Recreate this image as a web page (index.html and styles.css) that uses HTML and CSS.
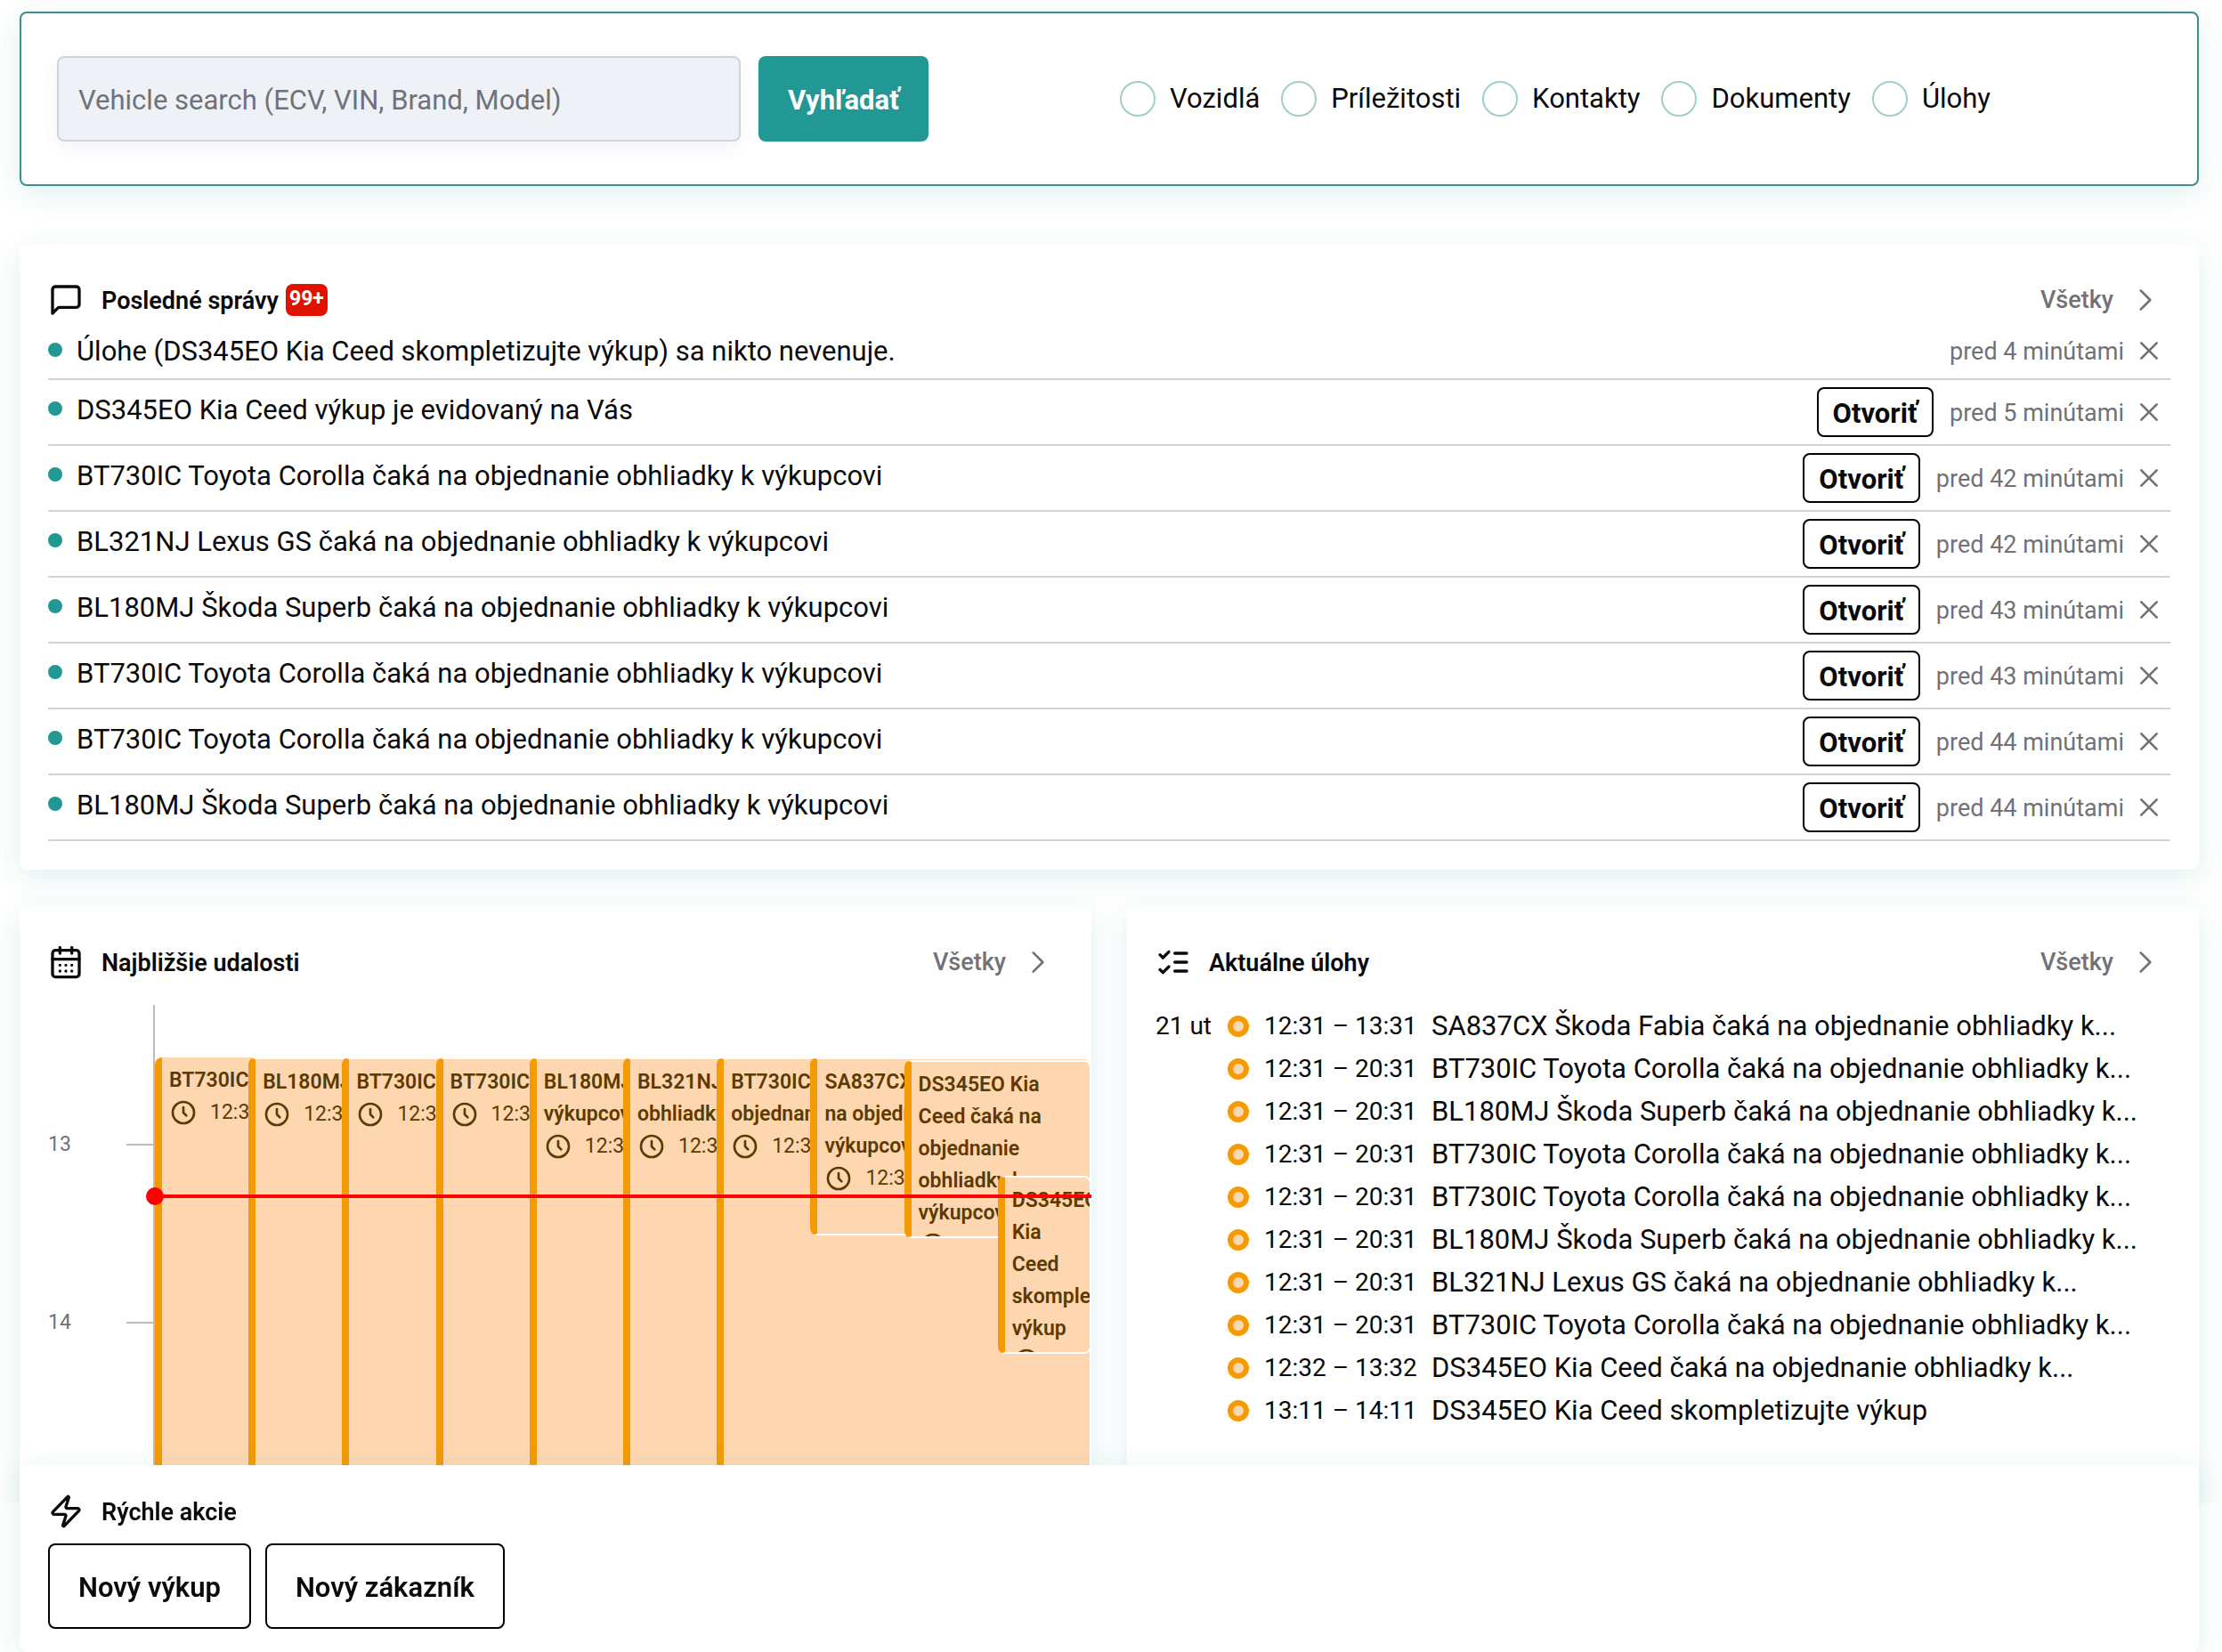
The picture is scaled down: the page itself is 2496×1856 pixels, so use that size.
FILE: index.html
```html
<!DOCTYPE html>
<html lang="sk">

<head>
    <meta charset="UTF-8" />
    <meta name="viewport" content="width=device-width, initial-scale=1.0" />
    <title>Prehľad</title>
    <link rel="stylesheet" href="styles.css">
</head>

<body>
    <svg class="sprite" aria-hidden="true">
        <symbol id="i-message" viewBox="0 0 24 24">
            <path d="M21 15a2 2 0 0 1-2 2H7l-4 4V5a2 2 0 0 1 2-2h14a2 2 0 0 1 2 2z" />
        </symbol>
        <symbol id="i-calendar" viewBox="0 0 24 24">
            <path d="M8 2v4M16 2v4M3 10h18M8 14h.01M12 14h.01M16 14h.01M8 18h.01M12 18h.01M16 18h.01" />
            <rect x="3" y="4" width="18" height="18" rx="2" />
        </symbol>
        <symbol id="i-tasks" viewBox="0 0 24 24">
            <path d="m3 17 2 2 4-4M3 7l2 2 4-4M13 6h8M13 12h8M13 18h8" />
        </symbol>
        <symbol id="i-zap" viewBox="0 0 24 24">
            <path d="M4 14a1 1 0 0 1-.78-1.63l9.9-10.2a.5.5 0 0 1 .86.46l-1.92 6.02A1 1 0 0 0 13 10h7a1 1 0 0 1 .78 1.63l-9.9 10.2a.5.5 0 0 1-.86-.46l1.92-6.02A1 1 0 0 0 11 14z" />
        </symbol>
        <symbol id="i-chevron" viewBox="0 0 24 24">
            <path d="m8 4 8 8-8 8" />
        </symbol>
        <symbol id="i-close" viewBox="0 0 24 24">
            <path d="M18.5 5.5l-13 13M5.5 5.5l13 13" />
        </symbol>
        <symbol id="i-clock" viewBox="0 0 24 24">
            <circle cx="12" cy="12" r="9" />
            <path d="M12 7.5V12l2.5 2.5" />
        </symbol>
    </svg>

    <main>
        <form class="card search">
            <div class="search-box">
                <input type="text" class="search-input" aria-label="Vehicle search"
                    placeholder="Vehicle search (ECV, VIN, Brand, Model)" />
                <button type="button" class="btn-primary">Vyhľadať</button>
            </div>
            <div class="search-types">
                <label><input type="radio" name="typ" />Vozidlá</label>
                <label><input type="radio" name="typ" />Príležitosti</label>
                <label><input type="radio" name="typ" />Kontakty</label>
                <label><input type="radio" name="typ" />Dokumenty</label>
                <label><input type="radio" name="typ" />Úlohy</label>
            </div>
        </form>

        <section class="card">
            <header class="card-header">
                <svg class="icon"><use href="#i-message" /></svg>
                <h2>Posledné správy</h2>
                <span class="badge">99+</span>
                <a href="#" class="all">Všetky <svg class="icon-sm"><use href="#i-chevron" /></svg></a>
            </header>
            <ul class="messages">
                <li>
                    <p>Úlohe (DS345EO Kia Ceed skompletizujte výkup) sa nikto nevenuje.</p>
                    <div class="actions">
                        <time>pred 4 minútami</time>
                        <button class="close" aria-label="Zavrieť"><svg class="icon-sm"><use href="#i-close" /></svg></button>
                    </div>
                </li>
                <li>
                    <p>DS345EO Kia Ceed výkup je evidovaný na Vás</p>
                    <div class="actions">
                        <button class="btn-small">Otvoriť</button>
                        <time>pred 5 minútami</time>
                        <button class="close" aria-label="Zavrieť"><svg class="icon-sm"><use href="#i-close" /></svg></button>
                    </div>
                </li>
                <li>
                    <p>BT730IC Toyota Corolla čaká na objednanie obhliadky k výkupcovi</p>
                    <div class="actions">
                        <button class="btn-small">Otvoriť</button>
                        <time>pred 42 minútami</time>
                        <button class="close" aria-label="Zavrieť"><svg class="icon-sm"><use href="#i-close" /></svg></button>
                    </div>
                </li>
                <li>
                    <p>BL321NJ Lexus GS čaká na objednanie obhliadky k výkupcovi</p>
                    <div class="actions">
                        <button class="btn-small">Otvoriť</button>
                        <time>pred 42 minútami</time>
                        <button class="close" aria-label="Zavrieť"><svg class="icon-sm"><use href="#i-close" /></svg></button>
                    </div>
                </li>
                <li>
                    <p>BL180MJ Škoda Superb čaká na objednanie obhliadky k výkupcovi</p>
                    <div class="actions">
                        <button class="btn-small">Otvoriť</button>
                        <time>pred 43 minútami</time>
                        <button class="close" aria-label="Zavrieť"><svg class="icon-sm"><use href="#i-close" /></svg></button>
                    </div>
                </li>
                <li>
                    <p>BT730IC Toyota Corolla čaká na objednanie obhliadky k výkupcovi</p>
                    <div class="actions">
                        <button class="btn-small">Otvoriť</button>
                        <time>pred 43 minútami</time>
                        <button class="close" aria-label="Zavrieť"><svg class="icon-sm"><use href="#i-close" /></svg></button>
                    </div>
                </li>
                <li>
                    <p>BT730IC Toyota Corolla čaká na objednanie obhliadky k výkupcovi</p>
                    <div class="actions">
                        <button class="btn-small">Otvoriť</button>
                        <time>pred 44 minútami</time>
                        <button class="close" aria-label="Zavrieť"><svg class="icon-sm"><use href="#i-close" /></svg></button>
                    </div>
                </li>
                <li>
                    <p>BL180MJ Škoda Superb čaká na objednanie obhliadky k výkupcovi</p>
                    <div class="actions">
                        <button class="btn-small">Otvoriť</button>
                        <time>pred 44 minútami</time>
                        <button class="close" aria-label="Zavrieť"><svg class="icon-sm"><use href="#i-close" /></svg></button>
                    </div>
                </li>
            </ul>
        </section>

        <div class="columns">
            <section class="card card-events">
                <header class="card-header">
                    <svg class="icon"><use href="#i-calendar" /></svg>
                    <h2>Najbližšie udalosti</h2>
                    <a href="#" class="all">Všetky <svg class="icon-sm"><use href="#i-chevron" /></svg></a>
                </header>
                <div class="timeline">
                    <div class="hours">
                        <span class="hour">13</span>
                        <span class="hour">14</span>
                    </div>
                    <!-- --col = stĺpec, --start = minúty od 12:31, --len = dĺžka v minútach -->
                    <div class="events">
                        <article class="event event-first" style="--col: 0; --start: 0; --len: 480">
                            <h3>BT730IC</h3>
                            <p><svg class="icon-sm"><use href="#i-clock" /></svg>12:31</p>
                        </article>
                        <article class="event" style="--col: 1; --start: 0; --len: 480">
                            <h3>BL180MJ</h3>
                            <p><svg class="icon-sm"><use href="#i-clock" /></svg>12:31</p>
                        </article>
                        <article class="event" style="--col: 2; --start: 0; --len: 480">
                            <h3>BT730IC</h3>
                            <p><svg class="icon-sm"><use href="#i-clock" /></svg>12:31</p>
                        </article>
                        <article class="event" style="--col: 3; --start: 0; --len: 480">
                            <h3>BT730IC</h3>
                            <p><svg class="icon-sm"><use href="#i-clock" /></svg>12:31</p>
                        </article>
                        <article class="event" style="--col: 4; --start: 0; --len: 480">
                            <h3>BL180MJ<br>výkupcovi</h3>
                            <p><svg class="icon-sm"><use href="#i-clock" /></svg>12:31</p>
                        </article>
                        <article class="event" style="--col: 5; --start: 0; --len: 480">
                            <h3>BL321NJ<br>obhliadky</h3>
                            <p><svg class="icon-sm"><use href="#i-clock" /></svg>12:31</p>
                        </article>
                        <article class="event" style="--col: 6; --start: 0; --len: 480">
                            <h3>BT730IC<br>objednanie</h3>
                            <p><svg class="icon-sm"><use href="#i-clock" /></svg>12:31</p>
                        </article>
                        <article class="event" style="--col: 7; --start: 0; --len: 60">
                            <h3>SA837CX<br>na objednanie<br>výkupcovi</h3>
                            <p><svg class="icon-sm"><use href="#i-clock" /></svg>12:31</p>
                        </article>
                        <article class="event" style="--col: 8; --start: 1; --len: 60">
                            <h3>DS345EO Kia<br>Ceed čaká na<br>objednanie<br>obhliadky k<br>výkupcovi</h3>
                            <p><svg class="icon-sm"><use href="#i-clock" /></svg>12:32</p>
                        </article>
                        <article class="event" style="--col: 9; --start: 40; --len: 60">
                            <h3>DS345EO<br>Kia<br>Ceed<br>skompletizujte<br>výkup</h3>
                            <p><svg class="icon-sm"><use href="#i-clock" /></svg>13:11</p>
                        </article>
                        <div class="now"></div>
                    </div>
                </div>
            </section>

            <section class="card">
                <header class="card-header">
                    <svg class="icon"><use href="#i-tasks" /></svg>
                    <h2>Aktuálne úlohy</h2>
                    <a href="#" class="all">Všetky <svg class="icon-sm"><use href="#i-chevron" /></svg></a>
                </header>
                <table class="tasks">
                    <tr><td class="day">21 ut</td><td class="state"><i class="dot"></i></td><td class="range">12:31 – 13:31</td><td>SA837CX Škoda Fabia čaká na objednanie obhliadky k...</td></tr>
                    <tr><td></td><td><i class="dot"></i></td><td class="range">12:31 – 20:31</td><td>BT730IC Toyota Corolla čaká na objednanie obhliadky k...</td></tr>
                    <tr><td></td><td><i class="dot"></i></td><td class="range">12:31 – 20:31</td><td>BL180MJ Škoda Superb čaká na objednanie obhliadky k...</td></tr>
                    <tr><td></td><td><i class="dot"></i></td><td class="range">12:31 – 20:31</td><td>BT730IC Toyota Corolla čaká na objednanie obhliadky k...</td></tr>
                    <tr><td></td><td><i class="dot"></i></td><td class="range">12:31 – 20:31</td><td>BT730IC Toyota Corolla čaká na objednanie obhliadky k...</td></tr>
                    <tr><td></td><td><i class="dot"></i></td><td class="range">12:31 – 20:31</td><td>BL180MJ Škoda Superb čaká na objednanie obhliadky k...</td></tr>
                    <tr><td></td><td><i class="dot"></i></td><td class="range">12:31 – 20:31</td><td>BL321NJ Lexus GS čaká na objednanie obhliadky k...</td></tr>
                    <tr><td></td><td><i class="dot"></i></td><td class="range">12:31 – 20:31</td><td>BT730IC Toyota Corolla čaká na objednanie obhliadky k...</td></tr>
                    <tr><td></td><td><i class="dot"></i></td><td class="range">12:32 – 13:32</td><td>DS345EO Kia Ceed čaká na objednanie obhliadky k...</td></tr>
                    <tr><td></td><td><i class="dot"></i></td><td class="range">13:11 – 14:11</td><td>DS345EO Kia Ceed skompletizujte výkup</td></tr>
                </table>
            </section>
        </div>
    </main>

    <section class="card quick">
        <header class="card-header">
            <svg class="icon"><use href="#i-zap" /></svg>
            <h2>Rýchle akcie</h2>
        </header>
        <div class="quick-buttons">
            <button class="btn-outline">Nový výkup</button>
            <button class="btn-outline">Nový zákazník</button>
        </div>
    </section>
</body>

</html>
```
FILE: styles.css
```css
:root {
    --teal: #219894;
    --teal-border: #3a8f8f;
    --text: #0a0a0b;
    --muted: #71717a;
    --line: #d1d5db;
    --orange: #f39a05;
    --peach: #fed7b0;
    --brown: #5c3a00;
}

* {
    box-sizing: border-box;
}

body {
    margin: 0;
    padding: 13px 26px 0 22px;
    background-color: #fff;
    color: var(--text);
    font-family: Roboto, "Liberation Sans", sans-serif;
    font-size: 31px;
    line-height: 48px;
}

h2,
h3,
p,
ul {
    margin: 0;
    padding: 0;
}

button,
input {
    font-family: inherit;
    font-size: inherit;
    color: inherit;
}

.sprite {
    display: none;
}

.icon,
.icon-sm {
    flex: none;
    width: 40px;
    height: 40px;
    fill: none;
    stroke: currentColor;
    stroke-width: 2;
    stroke-linecap: round;
    stroke-linejoin: round;
}

.icon-sm {
    width: 32px;
    height: 32px;
}

.card {
    padding: 32px;
    background-color: #fff;
    border-radius: 8px;
    box-shadow: 0 8px 32px rgba(33, 152, 148, 0.14);
}

.card-header {
    display: flex;
    align-items: center;
    height: 64px;
}

.card-header h2 {
    margin-left: 20px;
    padding-top: 2px;
    font-size: 27px;
    font-weight: 600;
}

.badge {
    margin-left: 8px;
    height: 36px;
    padding: 0 4px;
    border-radius: 8px;
    background-color: #e11200;
    color: #fff;
    font-size: 23px;
    font-weight: 700;
    line-height: 34px;
}

.all {
    display: flex;
    align-items: center;
    gap: 20px;
    margin-left: auto;
    margin-right: 12px;
    color: var(--muted);
    font-size: 27px;
    font-weight: 500;
    text-decoration: none;
}

/* search */

.search {
    display: grid;
    grid-template-columns: 1fr 1fr;
    align-items: center;
    padding: 48px 40px;
    border: 2px solid var(--teal-border);
}

.search-box {
    display: flex;
    gap: 20px;
}

.search-input {
    width: 768px;
    height: 96px;
    padding: 2px 22px 0;
    border: 2px solid #cbd5e1;
    border-radius: 8px;
    background-color: #eef1f5;
    box-shadow: 0 8px 20px rgba(60, 60, 150, 0.06);
}

.search-input::placeholder {
    color: var(--muted);
}

.btn-primary {
    height: 96px;
    padding: 2px 33px 0;
    border: 0;
    border-radius: 8px;
    background-color: var(--teal);
    color: #fff;
    font-weight: 700;
}

.search-types {
    display: flex;
    gap: 24px;
    padding-left: 12px;
}

.search-types label {
    display: flex;
    align-items: center;
    gap: 16px;
}

.search-types input {
    appearance: none;
    width: 40px;
    height: 40px;
    margin: 0;
    border: 2px solid #a3cccc;
    border-radius: 50%;
    background-color: #fff;
}

/* messages */

.search + .card {
    margin-top: 64px;
}

.messages {
    list-style: none;
}

.messages li {
    display: flex;
    align-items: flex-start;
    height: 74px;
    padding: 8px 0;
    border-bottom: 2px solid var(--line);
}

.messages li:first-child {
    height: 58px;
    padding-top: 0;
}

.messages li::before {
    content: "";
    flex: none;
    width: 16px;
    height: 16px;
    margin: 16px 16px 0 0;
    border-radius: 50%;
    background-color: var(--teal);
}

.messages p,
.messages time {
    padding-top: 2px;
}

.actions {
    display: flex;
    align-items: center;
    margin-left: auto;
    padding-right: 8px;
    color: var(--muted);
    font-size: 27px;
}

.btn-small {
    height: 56px;
    margin-right: 18px;
    padding: 2px 16px 0;
    border: 2px solid #000;
    border-radius: 8px;
    background-color: #fff;
    color: var(--text);
    font-size: 31px;
    font-weight: 700;
}

.close {
    display: flex;
    margin-left: 12px;
    padding: 0;
    border: 0;
    background: none;
}

/* events */

.columns {
    display: grid;
    grid-template-columns: 1fr 1fr;
    gap: 40px;
    margin-top: 40px;
}

.card-events {
    padding-right: 0;
    padding-bottom: 0;
}

.card-events .all {
    margin-right: 44px;
}

.timeline {
    display: flex;
    height: 560px;
    margin-top: 16px;
}

.hours {
    flex: none;
    width: 120px;
    padding-top: 133px;
    border-right: 2px solid #bbb;
}

.hour {
    display: flex;
    align-items: center;
    justify-content: space-between;
    height: 48px;
    margin-bottom: 152px;
    color: var(--muted);
    font-size: 23px;
}

.hour::after {
    content: "";
    width: 30px;
    height: 2px;
    background-color: #bbb;
}

/* cut at the bottom only, the dot of the current time sticks out on the left */
.events {
    position: relative;
    flex: 1;
    overflow-x: visible;
    overflow-y: clip;
}

.event {
    position: absolute;
    top: calc(59px + var(--start) * 200px / 60);
    left: calc(var(--col) * 10%);
    right: 0;
    height: calc(var(--len) * 200px / 60);
    padding: 8px;
    overflow: hidden;
    border: 2px solid #fff;
    border-left: 8px solid var(--orange);
    border-radius: 8px;
    background-color: var(--peach);
    color: var(--brown);
    font-size: 23px;
    line-height: 38px;
    white-space: nowrap;
}

.event-first {
    border-top: 0;
}

.event h3 {
    font-size: 23px;
    font-weight: 600;
    line-height: 36px;
}

.event p {
    display: flex;
    align-items: center;
    gap: 14px;
    height: 36px;
}

.now {
    position: absolute;
    top: 213px;
    left: 0;
    right: 0;
    height: 4px;
    background-color: #f00;
}

.now::before {
    content: "";
    position: absolute;
    top: -8px;
    left: -10px;
    width: 20px;
    height: 20px;
    border-radius: 50%;
    background-color: #f00;
}

/* tasks */

.tasks {
    width: 100%;
    margin-top: 16px;
    border-collapse: collapse;
    table-layout: fixed;
}

.tasks td {
    height: 48px;
    padding: 0;
    white-space: nowrap;
}

.tasks .day {
    width: 81px;
    font-size: 28px;
}

.tasks .state {
    width: 41px;
}

.tasks .range {
    width: 188px;
    font-size: 28px;
}

.dot {
    display: block;
    width: 24px;
    height: 24px;
    border: 6px solid var(--orange);
    border-radius: 50%;
    background-color: var(--peach);
}

/* quick actions, pinned to the bottom of the window */

.quick {
    position: fixed;
    left: 22px;
    right: 26px;
    bottom: 0;
    padding: 20px 32px 26px;
}

.quick-buttons {
    display: flex;
    gap: 16px;
    margin-top: 4px;
}

.btn-outline {
    height: 96px;
    padding: 2px 32px 0;
    border: 2px solid #000;
    border-radius: 8px;
    background-color: #fff;
    font-weight: 600;
}
```
